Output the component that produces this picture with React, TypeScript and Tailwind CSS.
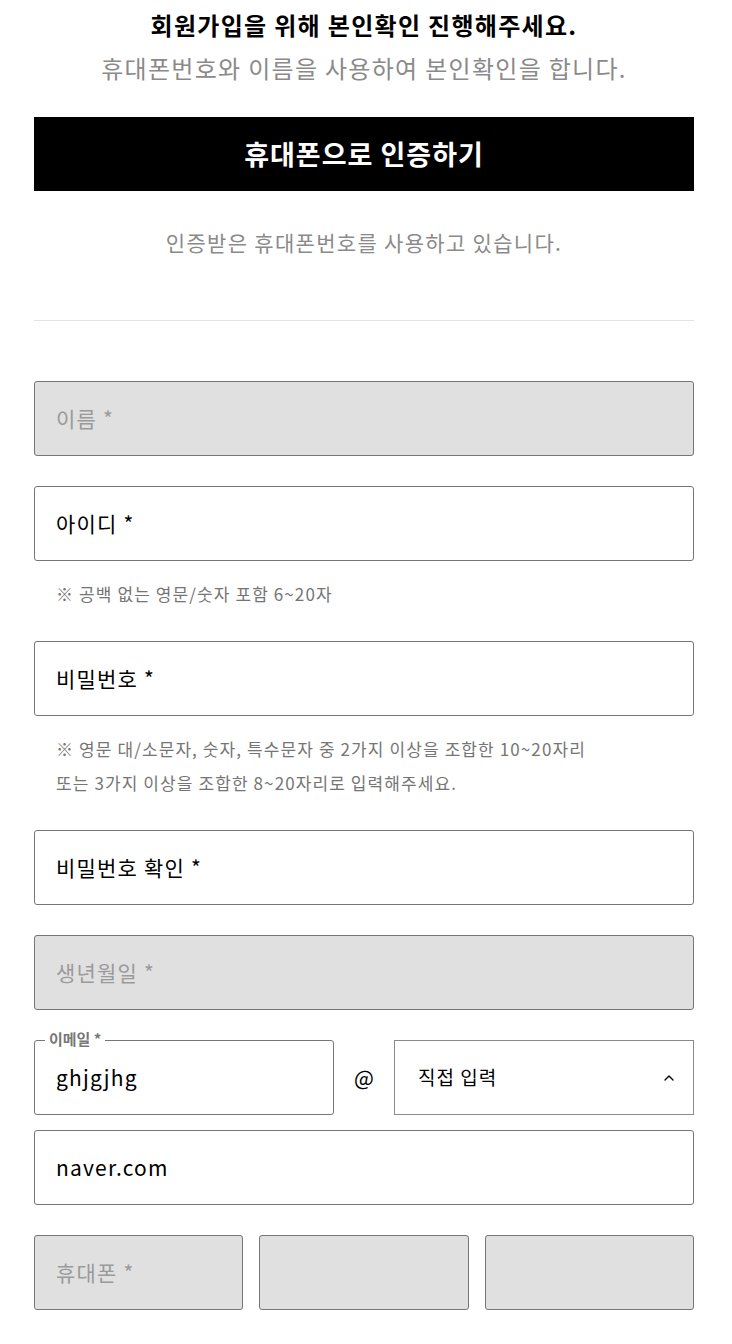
import { ChevronUp } from "lucide-react";

const font = { fontFamily: '"Noto Sans CJK KR", "Noto Sans", sans-serif' };

function Field({ label, disabled, value }: { label: string; disabled?: boolean; value?: string }) {
    return (
        <div
            className={`flex h-[75px] w-full items-center rounded-[3px] border border-[#767676] px-[21px] text-[21px] tracking-[1.2px] ${
                disabled ? "bg-[#e0e0e0] text-[#9a9a9a]" : "bg-white text-black"
            }`}
        >
            {value ?? label}
        </div>
    );
}

function Hint({ lines }: { lines: string[] }) {
    return (
        <div className="px-[22px] pt-[16px] pb-[30px] text-[17px] leading-[34px] tracking-[1.1px] text-[#757575]">
            {lines.map((l, i) => (
                <p key={i}>{l}</p>
            ))}
        </div>
    );
}

export default function App() {
    return (
        <div style={font} className="min-h-[1344px] bg-white">
            <div className="ml-[34px] w-[660px]">
                {/* heading */}
                <div className="pt-[7px] text-center">
                    <h1 className="text-[24px] leading-[36px] font-bold tracking-[1.3px] text-black">
                        회원가입을 위해 본인확인 진행해주세요.
                    </h1>
                    <p className="mt-[7px] text-[24px] leading-[36px] tracking-[1.3px] text-[#8a8a8a]">
                        휴대폰번호와 이름을 사용하여 본인확인을 합니다.
                    </p>
                </div>

                <button className="mt-[31px] flex h-[74px] w-full items-center justify-center bg-black text-[27px] font-bold tracking-[1px] text-white">
                    휴대폰으로 인증하기
                </button>

                <p className="mt-[36px] text-center text-[21px] leading-[30px] tracking-[1.3px] text-[#8a8a8a]">
                    인증받은 휴대폰번호를 사용하고 있습니다.
                </p>

                <div className="mt-[63px] border-t border-[#e3e3e3]" />

                <div className="pt-[60px]">
                    <Field label="이름 *" disabled />
                    <div className="h-[30px]" />
                    <Field label="아이디 *" />
                    <Hint lines={["※ 공백 없는 영문/숫자 포함 6~20자"]} />
                    <Field label="비밀번호 *" />
                    <Hint
                        lines={[
                            "※ 영문 대/소문자, 숫자, 특수문자 중 2가지 이상을 조합한 10~20자리",
                            "또는 3가지 이상을 조합한 8~20자리로 입력해주세요.",
                        ]}
                    />
                    <Field label="비밀번호 확인 *" />
                    <div className="h-[30px]" />
                    <Field label="생년월일 *" disabled />
                    <div className="h-[30px]" />

                    {/* email */}
                    <div className="flex items-center">
                        <div className="relative w-[300px]">
                            <span className="absolute top-[-12px] left-[11px] z-10 bg-white px-[4px] text-[15px] leading-[22px] font-bold text-[#777]">
                                이메일 *
                            </span>
                            <Field label="" value="ghjgjhg" />
                        </div>
                        <span className="w-[60px] text-center text-[21px] text-black">@</span>
                        <div className="flex h-[75px] flex-1 items-center justify-between border border-[#8a8a8a] pr-[16px] pl-[23px] text-[19px] tracking-[1px] text-black">
                            <span>직접 입력</span>
                            <ChevronUp size={16} strokeWidth={2} />
                        </div>
                    </div>
                    <div className="h-[15px]" />
                    <Field label="" value="naver.com" />
                    <div className="h-[30px]" />

                    {/* phone */}
                    <div className="grid grid-cols-3 gap-[16px]">
                        <Field label="휴대폰 *" disabled />
                        <Field label="" disabled />
                        <Field label="" disabled />
                    </div>
                </div>
            </div>
        </div>
    );
}
